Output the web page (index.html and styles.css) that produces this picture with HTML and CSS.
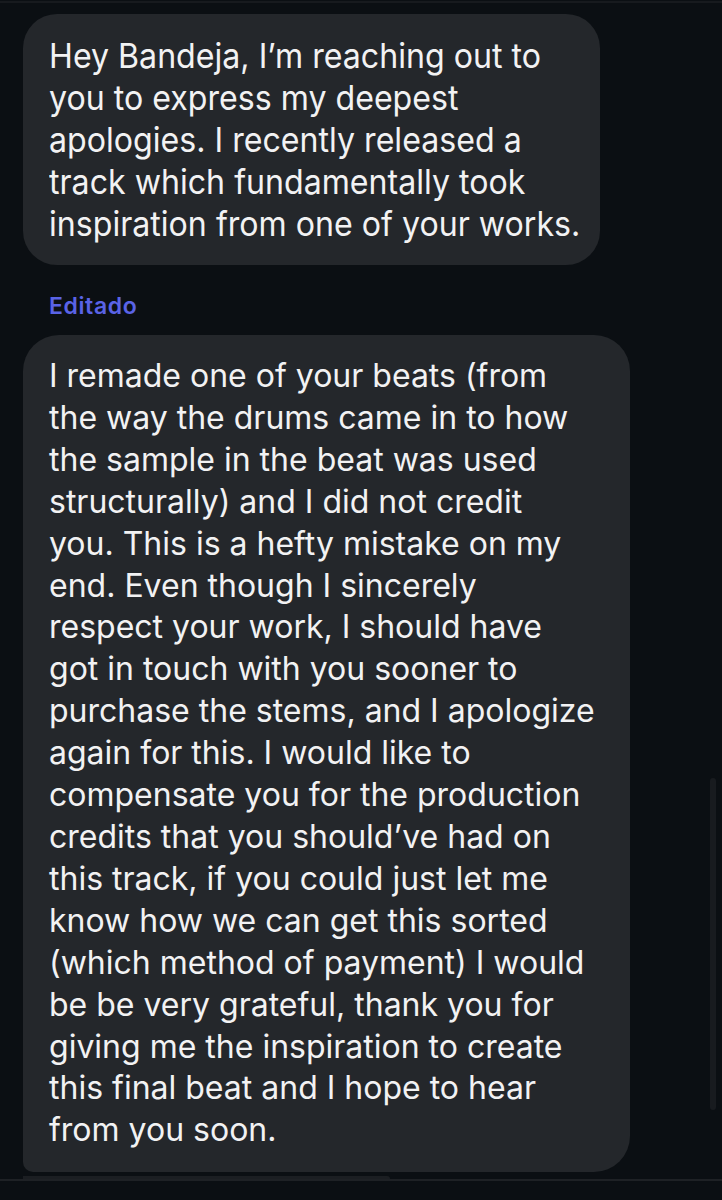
FILE: index.html
```html
<!DOCTYPE html>
<html lang="en">
<head>
<meta charset="utf-8">
<title>Chat</title>
<link rel="stylesheet" href="styles.css">
</head>
<body>
<div class="screen">
  <div class="topbar"></div>
  <div class="messages">
    <div class="bubble bubble-first">
      <p class="text condensed"><span>Hey Bandeja, I’m reaching out to<br>you to express my deepest<br>apologies. I recently released a<br>track which fundamentally took<br>inspiration from one of your works.</span></p>
    </div>
    <div class="edited">Editado</div>
    <div class="bubble bubble-second">
      <p class="text">I remade one of your beats (from<br>the way the drums came in to how<br>the sample in the beat was used<br>structurally) and I did not credit<br>you. This is a hefty mistake on my<br>end. Even though I sincerely<br>respect your work, I should have<br>got in touch with you sooner to<br>purchase the stems, and I apologize<br>again for this. I would like to<br>compensate you for the production<br>credits that you should’ve had on<br>this track, if you could just let me<br>know how we can get this sorted<br>(which method of payment) I would<br>be be very grateful, thank you for<br>giving me the inspiration to create<br>this final beat and I hope to hear<br>from you soon.</p>
    </div>
    <div class="bubble-next"></div>
  </div>
  <div class="bottombar"></div>
  <div class="scrollbar"></div>
</div>
</body>
</html>
```

FILE: styles.css
```css
html, body {
  margin: 0;
  padding: 0;
  background: #0b0f13;
}
.screen {
  position: relative;
  width: 722px;
  height: 1200px;
  overflow: hidden;
  background: #0b0f13;
  font-family: Inter, "Noto Sans", sans-serif;
  color: #f2f2f3;
}
.topbar {
  height: 1px;
  border-bottom: 2px solid #171a1e;
}
.messages {
  display: flex;
  flex-direction: column;
  align-items: flex-start;
  padding-left: 23px;
}
.bubble {
  background: #24272b;
  box-sizing: border-box;
}
.text {
  margin: 0;
  font-size: 32px;
  line-height: 41.9px;
  white-space: nowrap;
}
.bubble-first {
  margin-top: 11px;
  width: 577px;
  height: 251px;
  padding: 21px 26px;
  border-radius: 34px;
}
.condensed {
  font-size: 34px;
}
.condensed span {
  display: inline-block;
  transform-origin: left top;
  transform: scaleX(0.945);
}
.edited {
  margin-top: 28px;
  margin-left: 26px;
  font-size: 23px;
  font-weight: 600;
  letter-spacing: 0.6px;
  line-height: 26px;
  color: #5a63e6;
}
.bubble-second {
  margin-top: 16px;
  width: 607px;
  height: 837px;
  padding: 20px 26px;
  border-radius: 36px 36px 36px 10px;
}
.bubble-next {
  margin-top: 4px;
  width: 367px;
  height: 3px;
  background: #1b1e22;
  border-radius: 0 10px 0 0;
}
.bottombar {
  height: 2px;
  background: #1e2125;
}
.scrollbar {
  position: absolute;
  right: 6px;
  top: 778px;
  width: 6px;
  height: 332px;
  border-radius: 3px;
  background: #181b1f;
}
```
